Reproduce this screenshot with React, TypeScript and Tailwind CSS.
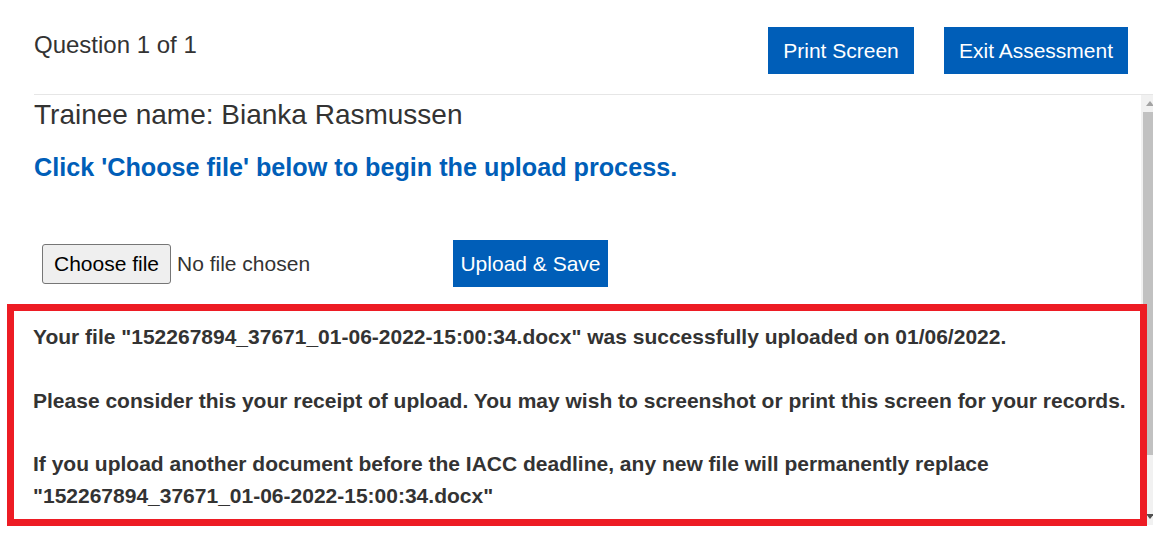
const blue = "bg-[#005eb8]";

const HeaderButton = ({ label, width }: { label: string; width: string }) => (
  <button
    className={`${blue} ${width} h-[47px] flex items-center justify-center text-[21px] text-white leading-none`}
  >
    {label}
  </button>
);

const ScrollBar = () => (
  <div className="w-[17px] shrink-0 h-[430px] bg-[#f1f1f1] flex flex-col">
    <div className="h-[17px] flex items-center justify-center">
      <svg width="8" height="5" viewBox="0 0 8 5">
        <path d="M0 5 L4 0 L8 5 Z" fill="#a3a3a3" />
      </svg>
    </div>
    <div className="mx-[2px] h-[343px] bg-[#c1c1c1]" />
    <div className="flex-1" />
    <div className="h-[17px] flex items-center justify-center">
      <svg width="8" height="5" viewBox="0 0 8 5">
        <path d="M0 0 L4 5 L8 0 Z" fill="#505050" />
      </svg>
    </div>
  </div>
);

export default function App() {
  return (
    <div className="w-[1153px] h-[539px] overflow-hidden bg-white font-['Liberation_Sans',Arial,sans-serif] text-[#333]">
      <header className="ml-[34px] h-[95px] flex items-start justify-between pr-[25px] border-b border-[#e6e6e6]">
        <h1 className="mt-[31px] text-[24px] leading-[28px]">Question 1 of 1</h1>
        <div className="mt-[27px] flex gap-[30px]">
          <HeaderButton label="Print Screen" width="w-[146px]" />
          <HeaderButton label="Exit Assessment" width="w-[184px]" />
        </div>
      </header>

      <div className="w-[1158px] h-[431px] flex">
        <main className="flex-1 min-w-0">
          <h2 className="ml-[34px] mt-[4px] text-[28px] leading-[32px]">
            Trainee name: Bianka Rasmussen
          </h2>
          <p className="ml-[34px] mt-[20px] text-[25.2px] leading-[32px] font-bold text-[#005eb8]">
            Click 'Choose file' below to begin the upload process.
          </p>

          <div className="ml-[42px] mt-[57px] h-[47px] flex items-center">
            <div className="w-[411px] flex items-center">
              <button className="w-[129px] h-[40px] bg-[#efefef] border border-[#767676] rounded-[3px] text-[21px] text-black">
                Choose file
              </button>
              <span className="ml-[6px] text-[21px] text-[#333]">No file chosen</span>
            </div>
            <button
              className={`${blue} w-[155px] h-[47px] flex items-center justify-center text-[21px] text-white`}
            >
              Upload &amp; Save
            </button>
          </div>

          <section className="relative z-10 ml-[7px] mt-[17px] w-[1140px] border-[7px] border-[#ed1c24] pl-[19px] pr-[2px] pt-[10px] pb-[7px] text-[21px] leading-[31.75px] font-bold text-[#333]">
            <p className="mb-[31.75px]">
              Your file "152267894_37671_01-06-2022-15:00:34.docx" was successfully uploaded on
              01/06/2022.
            </p>
            <p className="mb-[31.75px] whitespace-nowrap">
              Please consider this your receipt of upload. You may wish to screenshot or print this
              screen for your records.
            </p>
            <p>
              If you upload another document before the IACC deadline, any new file will permanently
              replace "152267894_37671_01-06-2022-15:00:34.docx"
            </p>
          </section>
        </main>
        <ScrollBar />
      </div>
    </div>
  );
}
